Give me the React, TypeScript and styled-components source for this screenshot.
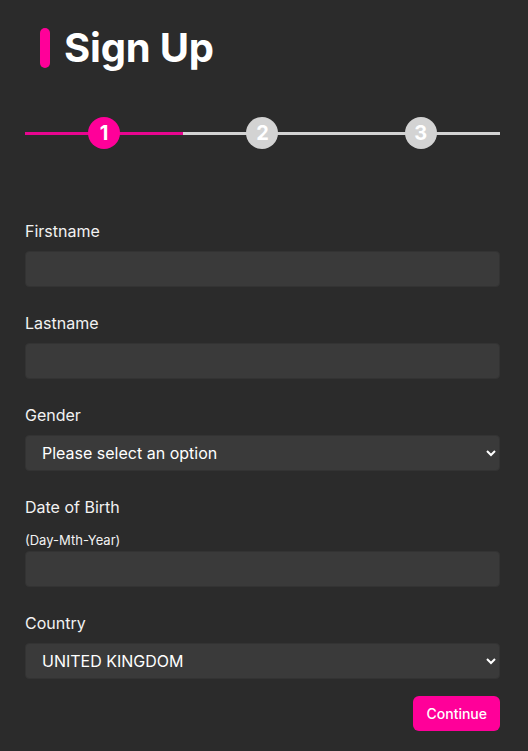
import React from "react";
import styled, { createGlobalStyle } from "styled-components";

const Global = createGlobalStyle`
  html, body { margin: 0; padding: 0; background: #2b2b2b; }
  body { font-family: Inter, "Noto Sans", sans-serif; color: #ffffff; }
  * { box-sizing: border-box; }
`;

const Page = styled.div`
  width: 475px;
  margin-left: 25px;
  padding-top: 28px;
  padding-bottom: 20px;
  display: flex;
  flex-direction: column;
`;

const TitleRow = styled.div`
  display: flex;
  align-items: center;
  gap: 14px;
  margin-left: 15px;
  height: 40px;
`;

const TitleBar = styled.span`
  width: 10px;
  height: 40px;
  border-radius: 5px;
  background: #ff0099;
`;

const Title = styled.h1`
  margin: 0;
  font-size: 40px;
  font-weight: 700;
  line-height: 40px;
  letter-spacing: -0.2px;
`;

const Stepper = styled.div`
  display: grid;
  grid-template-columns: repeat(3, 1fr);
  margin-top: 49px;
  height: 32px;
`;

const Step = styled.div<{ $active: boolean }>`
  position: relative;
  display: flex;
  align-items: center;
  justify-content: center;
  &::before {
    content: "";
    position: absolute;
    left: 0;
    right: 0;
    top: 50%;
    height: 3px;
    margin-top: -1.5px;
    background: ${(p) => (p.$active ? "#e8058f" : "#d3d3d3")};
  }
`;

const StepDot = styled.span<{ $active: boolean }>`
  position: relative;
  width: 32px;
  height: 32px;
  border-radius: 50%;
  background: ${(p) => (p.$active ? "#ff0099" : "#d3d3d3")};
  color: #ffffff;
  font-weight: 700;
  font-size: 20px;
  display: flex;
  align-items: center;
  justify-content: center;
`;

const Form = styled.form`
  display: flex;
  flex-direction: column;
  margin-top: 72px;
`;

const Field = styled.div`
  display: flex;
  flex-direction: column;
  margin-bottom: 26px;
`;

const Label = styled.label<{ $tight?: boolean }>`
  font-size: 16px;
  line-height: 20px;
  font-weight: 400;
  color: #f2f2f2;
  margin-bottom: ${(p) => (p.$tight ? "0" : "10px")};
`;

const Hint = styled.span`
  font-size: 13px;
  line-height: 16px;
  color: #f2f2f2;
  margin-top: 15px;
  margin-bottom: 3px;
`;

const Input = styled.input`
  height: 36px;
  width: 100%;
  border: 1px solid #333333;
  border-radius: 4px;
  background: #3a3a3a;
  color: #ffffff;
  font-family: Inter, sans-serif;
  font-size: 16px;
  padding: 0 16px;
  outline: none;
`;

const Select = styled.select`
  height: 36px;
  width: 100%;
  border: 1px solid #333333;
  border-radius: 4px;
  background: #3a3a3a;
  color: #ffffff;
  font-family: Inter, sans-serif;
  font-size: 16px;
  padding: 0 12px;
  outline: none;
  color-scheme: dark;
`;

const Actions = styled.div`
  display: flex;
  justify-content: flex-end;
  margin-top: -9px;
`;

const Button = styled.button`
  height: 35px;
  padding: 0 13px;
  border: none;
  border-radius: 6px;
  background: #ff0099;
  color: #ffffff;
  font-family: Inter, sans-serif;
  font-size: 14px;
  font-weight: 500;
`;

const steps = [1, 2, 3];

export default function App() {
  return (
    <>
      <Global />
      <Page>
        <TitleRow>
          <TitleBar />
          <Title>Sign Up</Title>
        </TitleRow>
        <Stepper>
          {steps.map((s) => (
            <Step key={s} $active={s === 1}>
              <StepDot $active={s === 1}>{s}</StepDot>
            </Step>
          ))}
        </Stepper>
        <Form onSubmit={(e) => e.preventDefault()}>
          <Field>
            <Label>Firstname</Label>
            <Input type="text" />
          </Field>
          <Field>
            <Label>Lastname</Label>
            <Input type="text" />
          </Field>
          <Field>
            <Label>Gender</Label>
            <Select defaultValue="">
              <option value="">Please select an option</option>
              <option value="m">Male</option>
              <option value="f">Female</option>
            </Select>
          </Field>
          <Field>
            <Label $tight>Date of Birth</Label>
            <Hint>(Day-Mth-Year)</Hint>
            <Input type="text" />
          </Field>
          <Field>
            <Label>Country</Label>
            <Select defaultValue="UK">
              <option value="UK">UNITED KINGDOM</option>
            </Select>
          </Field>
          <Actions>
            <Button type="submit">Continue</Button>
          </Actions>
        </Form>
      </Page>
    </>
  );
}
